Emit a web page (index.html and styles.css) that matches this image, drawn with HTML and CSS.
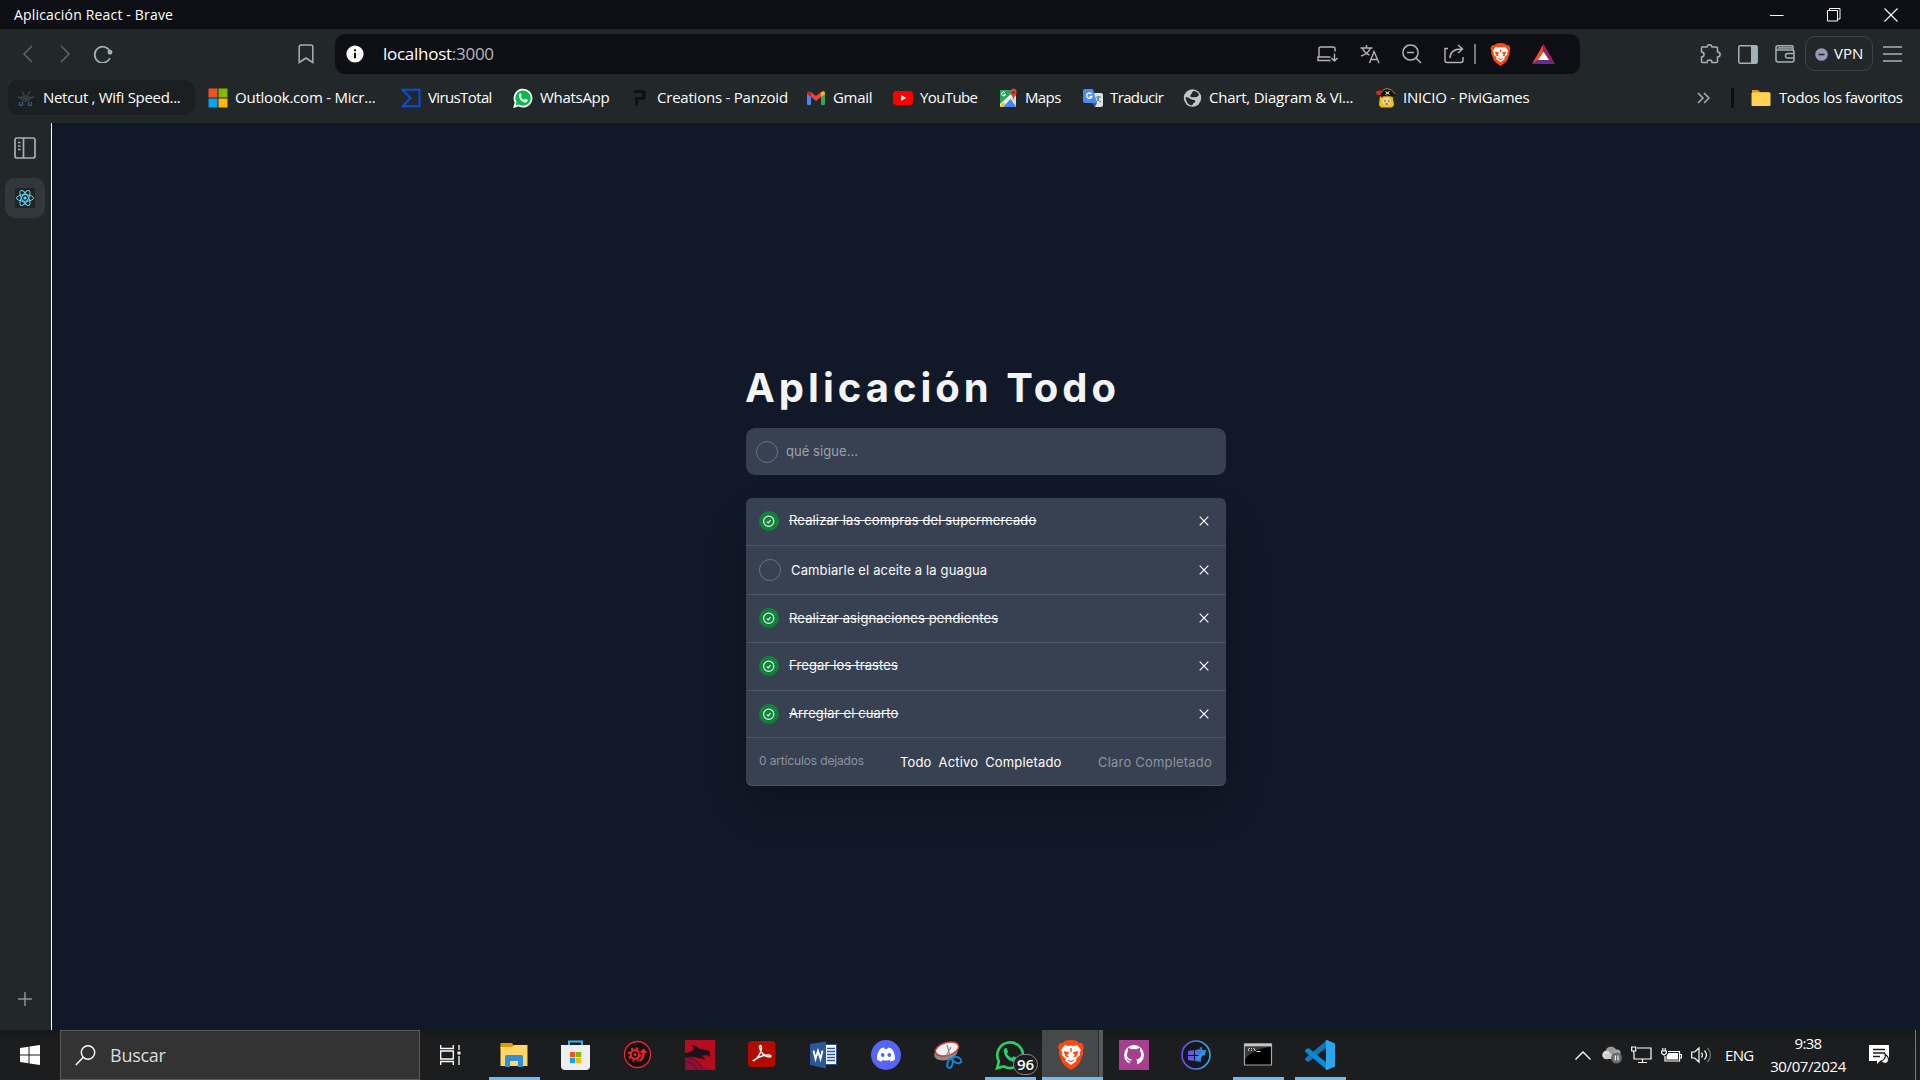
FILE: index.html
```html
<!DOCTYPE html>
<html lang="es">
<head>
<meta charset="utf-8">
<title>Aplicación React</title>
<link rel="stylesheet" href="styles.css">
</head>
<body>
<svg class="defs" width="0" height="0">
  <symbol id="lion" viewBox="0 0 26 30">
    <path fill="#fb4b12" d="M7 1Q13-1 19 1l2 2 3 0 2 4-1 3 0 4-3 8Q20 26 13 30 6 26 4 22L1 14V10L0 7 2 3H5z"/>
    <path fill="#fff" d="M7 5l3 1 3-.7L16 6l3-1 4 5-1.500 3 .5 2-4 4 .5 2-5.500 4-5.500-4 .5-2-4-4 .5-2L3 10z"/>
    <path fill="#fb4b12" d="M5.500 11l5 1 .5 1.500-2 1.500 2.500 2.500-4-1zM20.500 11l-5 1-.5 1.500 2 1.500-2.500 2.500 4-1zM12.300 8h1.400v4h-1.400zM9.500 19.500l3.500 1.500 3.500-1.500v.8L13 22.500l-3.500-2.200z"/>
  </symbol>
  <symbol id="check" viewBox="0 0 20 20">
    <circle cx="10" cy="10" r="10" fill="#15803d"/>
    <circle cx="9.700" cy="10.300" r="5.100" fill="none" stroke="#d1fae5" stroke-width="1.200"/>
    <path d="M7.900 10.700l1.400 1.200 2.300-2.800" fill="none" stroke="#d1fae5" stroke-width="1.300"/>
  </symbol>
  <symbol id="cross" viewBox="0 0 10 10"><path d="M.7.7l8.600 8.600M9.300.7L.7 9.300" fill="none" stroke="#fff" stroke-width="1.200"/></symbol>
  <symbol id="wapp" viewBox="0 0 30 30">
    <path d="M2 28.300l1.900-6.900A12.800 12.800 0 1 1 8.700 26.300z" fill="var(--wa-fill)" stroke="var(--wa-line)" stroke-width="2.600"/>
    <path d="M10.500 8q-2 1-1.800 3.500Q10 19 17 21.600q4 1 5-2.600l-.2-1.200-3.200-1.500-1.800 1.800q-3.300-1.200-5-4.500l1.300-1.700L11.700 8z" fill="var(--wa-phone)"/>
  </symbol>
</svg>

<header class="titlebar">
  <span class="titlebar-text">Aplicación React - Brave</span>
  <div class="window-buttons">
    <svg width="14" height="14" viewBox="0 0 14 14"><path d="M0 7.500h13.500" stroke="#fff"/></svg>
    <svg width="14" height="14" viewBox="0 0 14 14" fill="none" stroke="#fff"><path d="M.5 2.500h10v10.500h-10zM2.500 2.500v-2h10.500v10.500h-2.500"/></svg>
    <svg width="14" height="14" viewBox="0 0 14 14"><path d="M.5.500l13 13M13.500.500l-13 13" stroke="#fff" stroke-width="1.100"/></svg>
  </div>
</header>

<nav class="toolbar">
  <div class="nav-buttons">
    <svg width="12" height="18" viewBox="0 0 12 18" fill="none" stroke="#5d666b" stroke-width="1.500"><path d="M10 1L2 9l8 8"/></svg>
    <svg width="12" height="18" viewBox="0 0 12 18" fill="none" stroke="#5d666b" stroke-width="1.500"><path d="M2 1l8 8-8 8"/></svg>
    <svg width="20" height="18" viewBox="0 0 20 18" fill="none" stroke="#a3b2b9" stroke-width="1.700"><path d="M17 6.500A8 8 0 1 0 17 13"/><circle cx="17" cy="7.300" r="1.600" fill="#a3b2b9"/></svg>
  </div>
  <svg class="save" width="16" height="20" viewBox="0 0 16 20" fill="none" stroke="#a3b2b9" stroke-width="1.500"><path d="M1.200 18.500V3q0-2 2-2h9.600q2 0 2 2v15.500L8 14z"/></svg>
  <div class="address">
    <svg width="18" height="18" viewBox="0 0 18 18"><circle cx="9" cy="9" r="8.600" fill="#fff"/><path d="M9 7.800v5.400M9 4.300v2" stroke="#111" stroke-width="2"/></svg>
    <span class="url">localhost<span class="port">:3000</span></span>
    <div class="address-icons">
      <svg width="21" height="16" viewBox="0 0 21 16" fill="none" stroke="#b4b4b6" stroke-width="1.400"><path d="M2 11V2.500Q2 1 3.500 1H16q2 0 2 2v2.500M13.500 11H1v3.500h12.500M17.500 7.500v7M14.500 12l3 3 3-3"/></svg>
      <svg width="20" height="20" viewBox="0 0 20 20" fill="none" stroke="#b4b4b6" stroke-width="1.400"><path d="M.5 4h12M6.500 1v3M2.500 4Q5 10 9.500 11M10.500 4Q8 10 1 12M9.500 19L14 7.500 19 19M11 15.500h6.500"/></svg>
      <svg width="20" height="20" viewBox="0 0 20 20" fill="none" stroke="#b4b4b6" stroke-width="1.500"><circle cx="8.500" cy="8.500" r="7.600"/><path d="M14 14l5 5M5 8.500h7"/></svg>
      <svg width="21" height="20" viewBox="0 0 21 20" fill="none" stroke="#b4b4b6" stroke-width="1.400"><path d="M4 4.500H1v12q0 2 2 2h14q2 0 2-2V13M6 14q0-9 12-9M14 1l4.500 4-4.500 4"/></svg>
      <i class="divider"></i>
      <svg class="shield" width="21" height="23"><use href="#lion"/></svg>
      <svg width="23" height="20" viewBox="0 0 23 20"><path d="M11.500 0v7L6 16l-6 4z" fill="#ff4724"/><path d="M11.500 0L23 20l-6-4-5.500-9z" fill="#9e1f63"/><path d="M0 20h23l-6-4H6z" fill="#662d91"/><path d="M11.500 7.500L17 16H6z" fill="#fff"/></svg>
    </div>
  </div>
  <div class="tools">
    <svg width="21" height="20" viewBox="0 0 21 20" fill="none" stroke="#a3b2b9" stroke-width="1.500"><path d="M2 3h5q0-2.300 2.500-2.300T12 3h4.500q1 0 1 1v4q2.600 0 2.600 2.500T17.500 13v4.500q0 1-1 1H12q0-2.600-2.500-2.600T7 18.500H2.500q-1 0-1-1V13q2.500 0 2.500-2.500T1.500 8V4q0-1 .5-1z"/></svg>
    <svg width="20" height="19" viewBox="0 0 20 19"><rect x=".8" y=".8" width="18.400" height="17.400" rx="1.500" fill="none" stroke="#a3b2b9" stroke-width="1.500"/><path d="M13 1h6v17h-6z" fill="#a3b2b9"/></svg>
    <svg width="20" height="18" viewBox="0 0 20 18" fill="none" stroke="#a3b2b9" stroke-width="1.500"><path d="M18 5V1.500q0-.7-.8-.7H3Q1 .8 1 2.500V15q0 2 2 2h14q2 0 2-2V7q0-2-2-2H3Q1 5 1 3M19 8.500h-6.500q-2 0-2 2.300t2 2.300H19"/><path d="M3 2.900h14"/></svg>
    <span class="vpn"><svg width="13" height="13" viewBox="0 0 13 13"><circle cx="6.500" cy="6.500" r="6.300" fill="#9a98b5"/><path d="M3.500 6.500h6" stroke="#22262a" stroke-width="1.600"/></svg>VPN</span>
    <svg width="19" height="16" viewBox="0 0 19 16" stroke="#a3b2b9" stroke-width="1.500"><path d="M0 1h19M0 8h19M0 15h19"/></svg>
  </div>
</nav>

<nav class="bookmarks">
  <span class="bookmark hovered"><svg width="20" height="20" viewBox="0 0 20 20"><g stroke="#3c4347" stroke-width="1.300" fill="none"><path d="M6 3l2 4M14 3l-2 4M2 9l4 1M18 9l-4 1"/></g><ellipse cx="9.500" cy="10.500" rx="5" ry="3.500" fill="#33393d"/><path d="M4 14q-2 3.500 1 3.500t1-3.500M15 14q2 3.500-1 3.500t-1-3.500" fill="none" stroke="#2f6680" stroke-width="1.300"/></svg>Netcut , Wifi Speed...</span>
  <span class="bookmark loose"><svg width="20" height="20" viewBox="0 0 20 20"><path fill="#f25022" d="M.5.500h9v9h-9z"/><path fill="#7fba00" d="M10.500.5h9v9h-9z"/><path fill="#00a4ef" d="M.5 10.500h9v9h-9z"/><path fill="#ffb900" d="M10.500 10.500h9v9h-9z"/></svg>Outlook.com - Micr...</span>
  <span class="bookmark tight"><svg width="20" height="20" viewBox="0 0 20 20"><path d="M1.500 1.800h17v16.400h-17L9.500 10z" fill="none" stroke="#0b4dda" stroke-width="2"/></svg>VirusTotal</span>
  <span class="bookmark wa-solid"><svg width="20" height="20"><use href="#wapp"/></svg>WhatsApp</span>
  <span class="bookmark loose"><svg width="20" height="20" viewBox="0 0 20 20"><path d="M4 2h10l2 2v6l-2 2H8v6H5V9h7V5H4z" fill="#0f1113"/></svg>Creations - Panzoid</span>
  <span class="bookmark"><svg width="20" height="20" viewBox="0 0 20 20"><path fill="#4285f4" d="M1 5l4 3v9H2q-1 0-1-1z"/><path fill="#34a853" d="M15 8l4-3v11q0 1-1 1h-3z"/><path fill="#ea4335" d="M5 4l5 4 5-4v5l-5 4-5-4z"/><path fill="#c5221f" d="M1 5q0-3 4-1v5L1 6z"/><path fill="#fbbc04" d="M15 4q4-2 4 1v1l-4 3z"/></svg>Gmail</span>
  <span class="bookmark tight"><svg width="20" height="20" viewBox="0 0 20 20"><rect y="3" width="20" height="14" rx="3.500" fill="#f00"/><path d="M8 7l5 3-5 3z" fill="#fff"/></svg>YouTube</span>
  <span class="bookmark tight"><svg width="20" height="20" viewBox="0 0 20 20"><path fill="#26a85b" d="M2 2h14v16H2z"/><path fill="#4285f4" d="M4 19l7-9 7 9z"/><path fill="#f4f4f4" d="M2 16L14 5l2 2L5 19H2z"/><path fill="#fbc116" d="M2 18l3-4 2 2-2 3H2z"/><path fill="#d9dde0" d="M12 10l6-3v12z"/><path d="M15.500 12q0-3-2.500-5-2-6 2.500-6.500Q20 1 18 7q-2.500 2-2.500 5z" fill="#db4437"/><circle cx="15.500" cy="4.500" r="1.300" fill="#7b231e"/><path d="M7 4.500a2 2 0 1 0 .5 2H5.800" fill="none" stroke="#fff"/></svg>Maps</span>
  <span class="bookmark tight"><svg width="20" height="20" viewBox="0 0 20 20"><path fill="#dfe3e6" d="M9 5h9q2 0 2 2v10q0 2-2 2h-6z"/><path fill="#4a8af4" d="M2 1h8l4 14H2q-2 0-2-2V3q0-2 2-2z"/><path fill="#3554ba" d="M9 15h5l-2 4z"/><path d="M8.500 6a2.700 2.700 0 1 0 .5 2.500H6.500" fill="none" stroke="#fff" stroke-width="1.300"/><path d="M13 9h5M16 8q0 4-3 6M14 10q1 3 4 4" fill="none" stroke="#60717a"/></svg>Traducir</span>
  <span class="bookmark loose"><svg width="20" height="20" viewBox="0 0 20 20"><circle cx="10.500" cy="10" r="8.700" fill="#c3c7cb"/><path d="M11 3q5 0 6 4-2 3-5 2-3 1-4-1 2-3 3-5zM3.500 9q3 0 5 2 2 1 4 1 2 2-1 3-1 2-2 2.500Q4 16 3.500 9z" fill="#23282b"/></svg>Chart, Diagram &amp; Vi...</span>
  <span class="bookmark loose"><svg width="20" height="20" viewBox="0 0 20 20"><path fill="#e8c51d" d="M4 8h12.500l1.500 9-2 2.500H5L3 17z"/><ellipse cx="10.500" cy="13.500" rx="4.300" ry="4" fill="#efd09a"/><path fill="#111" d="M4 7Q5 1 11 .5 17 0 19.500 7l-2 2.500Q11 7 5 9.500z"/><path d="M5 5Q7 .5 11 .5 16 .5 19 6M5 9.500q6-3 12.500 0" fill="none" stroke="#b58a24"/><path fill="#d42d28" d="M0 3.500l5-1.500-.5 5L1 7z"/><path d="M9.500 3.500l4 3M13.500 3.500l-4 3" stroke="#fff"/><path d="M8 13h1.500M12 13h1.500M9.500 16h2.500" stroke="#5a3a12"/></svg>INICIO - PiviGames</span>
  <svg class="more" width="13" height="12" viewBox="0 0 13 12" fill="none" stroke="#a3b2b9" stroke-width="1.500"><path d="M1 1l5 5-5 5M7 1l5 5-5 5"/></svg>
  <i class="bar"></i>
  <span class="bookmark all"><svg width="20" height="18" viewBox="0 0 20 18"><path fill="#d79a1c" d="M1 1h6l2 2h9v5H1z"/><rect x=".5" y="3.500" width="19" height="13.500" rx="1" fill="#ffd154"/></svg>Todos los favoritos</span>
</nav>

<div class="browser">
  <aside class="side-tabs">
    <svg class="panel-icon" width="22" height="22" viewBox="0 0 22 22" fill="none" stroke="#a3b2b9" stroke-width="1.700"><rect x="1" y="1" width="20" height="20" rx="2"/><path d="M9.500 1v20M4 5.500h2.500M4 9h2.500M4 12.500h2.500"/></svg>
    <div class="tab">
      <svg width="20" height="20" viewBox="0 0 20 20"><rect width="20" height="20" rx="2" fill="#222"/><g fill="none" stroke="#61dafb"><ellipse cx="10" cy="10" rx="8.500" ry="3.300"/><ellipse cx="10" cy="10" rx="8.500" ry="3.300" transform="rotate(60 10 10)"/><ellipse cx="10" cy="10" rx="8.500" ry="3.300" transform="rotate(120 10 10)"/></g><circle cx="10" cy="10" r="1.600" fill="#61dafb"/></svg>
    </div>
    <svg class="new-tab" width="14" height="14" viewBox="0 0 14 14" stroke="#8d9295" stroke-width="1.500"><path d="M7 0v14M0 7h14"/></svg>
  </aside>
  <main class="page">
    <div class="todo">
      <h1>Aplicación Todo</h1>
      <div class="new-item"><span class="ring"></span><span class="hint">qué sigue...</span></div>
      <section class="list">
        <div class="item done h47"><svg class="mark"><use href="#check"/></svg><span class="label">Realizar las compras del supermercado</span><svg class="remove"><use href="#cross"/></svg></div>
        <div class="item h48"><span class="ring"></span><span class="label">Cambiarle el aceite a la guagua</span><svg class="remove"><use href="#cross"/></svg></div>
        <div class="item done h47"><svg class="mark"><use href="#check"/></svg><span class="label level">Realizar asignaciones pendientes</span><svg class="remove"><use href="#cross"/></svg></div>
        <div class="item done h47"><svg class="mark"><use href="#check"/></svg><span class="label">Fregar los trastes</span><svg class="remove"><use href="#cross"/></svg></div>
        <div class="item done h46"><svg class="mark"><use href="#check"/></svg><span class="label">Arreglar el cuarto</span><svg class="remove"><use href="#cross"/></svg></div>
        <footer class="summary">
          <span class="count">0 artículos dejados</span>
          <div class="filters"><span>Todo</span><span>Activo</span><span>Completado</span></div>
          <span class="clear">Claro Completado</span>
        </footer>
      </section>
    </div>
  </main>
</div>

<footer class="taskbar">
  <div class="start"><svg width="20" height="20" viewBox="0 0 20 20" fill="#fff"><path d="M0 3l8.500-1.200v7.700H0zM9.500 1.600L20 0v9.500H9.500zM0 10.500h8.500v7.700L0 17zM9.500 10.500H20V20L9.500 18.400z"/></svg></div>
  <div class="search">
    <svg width="21" height="21" viewBox="0 0 21 21" fill="none" stroke="#fff" stroke-width="1.400"><circle cx="13" cy="7.500" r="6.700"/><path d="M8.300 12.300L.8 20"/></svg>
    <span>Buscar</span>
  </div>
  <div class="task-view"><svg width="21" height="20" viewBox="0 0 21 20" fill="none" stroke="#fff" stroke-width="1.300"><path d="M.7 0v3.500h12.600V0M.7 20v-3.500h12.600V20M.7 6h12.600v8H.7zM19 0v5M19 11v9"/><path d="M17.500 6.500h3v3h-3z" fill="#fff" stroke="none"/></svg></div>
  <div class="apps">
    <div class="app open"><svg width="30" height="30" viewBox="0 0 30 30"><path fill="#e09a00" d="M1.500 3H13l2 3v3H1.500z"/><path fill="#ffd667" d="M1.500 7H13l2-2h13.500v21h-27z"/><path fill="#2f8fd8" d="M6 27V17q0-2 2-2h14q2 0 2 2v10h-5v-6h-8v6z"/></svg></div>
    <div class="app"><svg width="30" height="30" viewBox="0 0 30 30"><path d="M8 7V1.500h13V7" fill="none" stroke="#2fb4f2" stroke-width="2"/><path d="M0 5h29v21q0 4-4 4H4q-4 0-4-4z" fill="#efefef"/><path fill="#f25022" d="M9 12h5.200v5.200H9z"/><path fill="#7fba00" d="M15 12h5.200v5.200H15z"/><path fill="#00a4ef" d="M9 18h5.200v5.200H9z"/><path fill="#ffb900" d="M15 18h5.200v5.200H15z"/></svg></div>
    <div class="app"><svg width="30" height="30" viewBox="0 0 30 30"><circle cx="14.500" cy="14.500" r="13" fill="#111" stroke="#ef2529" stroke-width="1.300"/><circle cx="12" cy="14.500" r="4.300" fill="none" stroke="#ef2529" stroke-width="2.200"/><circle cx="12" cy="14.500" r="6.200" fill="none" stroke="#ef2529" stroke-width="2" stroke-dasharray="2.430 2.440"/><circle cx="12" cy="14.500" r="1.500" fill="#ef2529"/><path d="M11 21q8 1 8-8h-3l4.500-5 4.500 5h-3q0 9.500-8 9z" fill="#ef2529" stroke="#111" stroke-width=".7"/></svg></div>
    <div class="app"><svg width="30" height="30" viewBox="0 0 30 30"><path fill="#b50d1f" d="M0 0h30v30H0z"/><path d="M0 15Q8 16 12 21t14 9H0z" fill="#8e1035"/><path d="M0 17q12 0 17 12M0 22q8 0 12 8" fill="none" stroke="#5b0d28"/><path fill="#1c1219" d="M0 13q7-1 9-4l-2-4 7 4 8 1 3 3v4l-3-2-6 1q4 1 4 4-3-2-7-2-6-2-13-1z"/><path d="M14 9L9 6M18 11l7 1" stroke="#1c1219" stroke-width="1.500"/></svg></div>
    <div class="app"><svg width="30" height="30" viewBox="0 0 30 30"><rect x="1" y="1" width="27.500" height="26" rx="4" fill="#b30b00"/><path d="M6.500 20.500c4-1 9-10 7.700-14-.5-1.500-2-1-1.700 1 .8 5 5.500 9.500 10 9.500 2 0 2-2-.5-2-4-.3-11 2-14 4.500-1.500 1.200-1 1.700-1.500 1z" fill="none" stroke="#fff" stroke-width="1.500"/></svg></div>
    <div class="app"><svg width="30" height="30" viewBox="0 0 30 30"><path fill="#fff" stroke="#2b579a" d="M15 4.500h12.500v20H15z"/><path d="M18 8.500h8M18 11.500h8M18 14.500h8M18 17.500h8M18 20.500h8" stroke="#2b579a" stroke-width="1.300"/><path fill="#2b579a" d="M1 4l16-2.500v27L1 25z"/><path d="M4.500 10.500l2 8.500L9 11l2.500 8 2-8.500" fill="none" stroke="#fff" stroke-width="1.900"/></svg></div>
    <div class="app"><svg width="30" height="30" viewBox="0 0 30 30"><circle cx="15" cy="15" r="15" fill="#5865f2"/><path d="M9 9q2-1.300 4-1.400l.7 1.400h2.600l.7-1.400q2 .1 4 1.400 3.300 5 3 10.500-2 1.600-4.300 2.200l-1-1.800q-3.700 1-7.400 0l-1 1.800Q8 21.100 6 19.500 5.700 14 9 9z" fill="#fff"/><circle cx="11.700" cy="15" r="1.900" fill="#5865f2"/><circle cx="18.300" cy="15" r="1.900" fill="#5865f2"/></svg></div>
    <div class="app"><svg width="30" height="30" viewBox="0 0 30 30"><ellipse cx="13" cy="13" rx="12" ry="7" transform="rotate(-16 13 13)" fill="#8b8b8b"/><ellipse cx="14" cy="9" rx="12" ry="6.500" transform="rotate(-16 14 9)" fill="#f1f1f1" stroke="#c43b3b" stroke-width="1.500"/><path d="M14 5l4 14M18 7l-6 11" stroke="#8d8d8d" stroke-width="1.200"/><g fill="none" stroke="#1584cf" stroke-width="2"><ellipse cx="17" cy="23.500" rx="2.500" ry="4.500" transform="rotate(15 17 23.500)"/><ellipse cx="24" cy="20" rx="4.500" ry="2.800" transform="rotate(25 24 20)"/></g></svg></div>
    <div class="app open wa-line"><svg width="30" height="30"><use href="#wapp"/></svg><span class="badge">96</span></div>
    <div class="app open active"><svg width="26" height="30"><use href="#lion"/></svg></div>
    <div class="app"><svg width="30" height="30" viewBox="0 0 30 30"><path fill="#a63f8f" d="M0 0h30v30H0z"/><circle cx="15" cy="15" r="10" fill="#fff"/><path d="M12 25.500v-3q-3 .5-4-2M18 25.500v-4q0-1.500-1-2 5-.5 5-5 0-2-1-3.300.5-1.700-.2-3.200-2 .2-3.300 1.200-2.500-.6-5 0Q11.200 8.200 9.200 8q-.7 1.500-.2 3.200-1 1.300-1 3.300 0 4.500 5 5-1 .5-1 2v4z" fill="#a63f8f"/><path d="M12 24v-3q-3 .5-4-2" fill="none" stroke="#a63f8f"/></svg></div>
    <div class="app"><svg width="30" height="30" viewBox="0 0 30 30"><defs><linearGradient id="ring"><stop stop-color="#7447e8"/><stop offset="1" stop-color="#27b5e0"/></linearGradient></defs><circle cx="15" cy="15" r="14" fill="#14171f" stroke="url(#ring)" stroke-width="1.600"/><path fill="#6657e6" d="M7 11l6-1v5H7zM7 16h6v5l-6-1z"/><path fill="#4a70e2" d="M14 10l6-1v6h-6zM14 16h6v6l-6-1z"/><path fill="#2299e0" d="M16 16q5-1 4-7l-2-1 3-1v3h4l-1 5-3 1q-1 4-5 4z"/></svg></div>
    <div class="app open"><svg width="30" height="30" viewBox="0 0 30 30"><path fill="#000" stroke="#a5a8aa" stroke-width="1.200" d="M1.500 4h27v21h-27z"/><path fill="#c3c6c9" d="M1.500 3.500h27v3h-27z"/><path fill="#3a3a3a" d="M2 7h25q-17 2-25 12z"/><path d="M7 8q-3 1-1 3M8.500 8v1M8.500 10v1M10.500 8l2 3M13.500 11.500h4" fill="none" stroke="#ddd"/></svg></div>
    <div class="app open"><svg width="30" height="30" viewBox="0 0 30 30"><path fill="#1277b8" d="M22 0v7L4 21.500q-1 .7-2 0L.5 20q-1-1 0-2z"/><path fill="#0a8ad6" d="M22 30v-7L4 8.500q-1-.7-2 0L.5 10q-1 1 0 2z"/><path fill="#2aa5ee" d="M22 0l8 3.500v23L22 30q-2 0-1-2V2q-1-2 1-2z"/></svg></div>
  </div>
  <div class="tray">
    <svg width="16" height="9" viewBox="0 0 16 9" fill="none" stroke="#fff" stroke-width="1.300"><path d="M.5 8.500L8 1l7.500 7.500"/></svg>
    <svg width="20" height="18" viewBox="0 0 20 18"><circle cx="9" cy="6" r="5.500" fill="#999"/><circle cx="4.500" cy="9" r="4.200" fill="#ddd"/><path d="M3 8h12v5H3z" fill="#ccc"/><circle cx="15" cy="7" r="3.500" fill="#aaa"/><circle cx="14.500" cy="12" r="5.500" fill="#6a6a6a"/><path d="M13.300 9.500v5M16 9.500v5" stroke="#fff" stroke-width="1.100"/></svg>
    <svg width="21" height="18" viewBox="0 0 21 18" fill="none" stroke="#fff" stroke-width="1.200"><path d="M6 2h14v11H3V7M11.500 13v3M7 16.500h9M.7 1h4v4h-4zM2.700 5v2"/></svg>
    <svg width="21" height="15" viewBox="0 0 21 15" fill="none" stroke="#fff" stroke-width="1.200"><path d="M7 3.500h11.500v9.500H4V8M19 6.500h1.500v3.500H19M.7 3h4.600v2.500L3 7 .7 5.500zM1.800 0v3M4.200 0v3"/><path d="M7.500 5h9.500v6.500H5.500V8z" fill="#fff" stroke="none"/></svg>
    <svg width="21" height="18" viewBox="0 0 21 18" fill="none" stroke="#fff" stroke-width="1.200"><path d="M.7 6v6h3L8 16V2L3.700 6zM10.500 6.500q2 2.500 0 5M13.500 4.500q4 4.500 0 9"/><path d="M16.500 2q6 7 0 14" stroke="#777"/></svg>
    <span class="lang">ENG</span>
    <div class="clock"><span class="time">9:38</span><span>30/07/2024</span></div>
    <svg width="21" height="20" viewBox="0 0 21 20"><path fill="#fff" d="M0 0h20v16h-9l-3 3v-3H0z"/><path d="M4 4.500h12M4 8h12M4 11.500h7" stroke="#1c1d1e" stroke-width="1.300"/><path d="M16 9q1.500 5-4 7 2 3.500 6 2 4-4-2-9z" fill="#fff" stroke="#1c1d1e" stroke-width="1.200"/></svg>
    <i class="show-desktop"></i>
  </div>
</footer>
</body>
</html>
```
FILE: styles.css
```css
* { box-sizing: border-box; }
body {
  margin: 0;
  width: 1920px;
  height: 1080px;
  overflow: hidden;
  display: flex;
  flex-direction: column;
  font-family: "Open Sans", "Noto Sans", sans-serif;
  color: #fff;
  background: #22272a;
}
svg { display: block; flex: none; }
.defs { position: absolute; }

/* window chrome */
.titlebar {
  height: 29px;
  flex: none;
  display: flex;
  align-items: center;
  justify-content: space-between;
  padding: 0 22px 0 14px;
  background: #0e0f14;
  font-size: 14px;
  letter-spacing: .17px;
}
.window-buttons { display: flex; gap: 43px; }
.toolbar {
  height: 50px;
  flex: none;
  display: flex;
  align-items: center;
}
.nav-buttons { display: flex; gap: 25px; width: 298px; padding-left: 22px; }
.nav-buttons svg:last-child { margin-left: -3px; }
.address {
  width: 1245px;
  height: 40px;
  margin-left: 21px;
  padding: 0 25px 0 11px;
  display: flex;
  align-items: center;
  border-radius: 10px;
  background: #0e0f14;
}
.url { margin-left: 19px; padding-bottom: 2px; font-size: 17px; letter-spacing: -.27px; }
.port { color: #b6b7ba; }
.address-icons { display: flex; align-items: center; margin-left: auto; gap: 22px; }
.divider { width: 2px; height: 20px; margin: 0 -8px 0 -13px; background: #77797c; }
.shield { margin-right: -1px; }
.tools { display: flex; align-items: center; gap: 17px; margin-left: 120px; }
.vpn {
  display: flex;
  align-items: center;
  gap: 6px;
  width: 68px;
  height: 35px;
  margin: -1px -7px 0 -7px;
  padding: 0 0 1px 9px;
  border: 1px solid #3b464b;
  border-radius: 10px;
  font-size: 15px;
}
.vpn svg { margin-top: 2px; }

.bookmarks {
  height: 44px;
  flex: none;
  display: grid;
  grid-template-columns: 200px 193px 112px 117px 176px 87px 105px 85px 99px 194px 321px 34px 20px 1fr;
  align-items: center;
  padding: 1px 0 8px 8px;
}
.bookmark {
  display: flex;
  align-items: center;
  gap: 7px;
  height: 35px;
  padding-bottom: 2px;
  font-size: 15px;
  letter-spacing: -.3px;
  white-space: nowrap;
}
.bookmark svg { margin-top: 2px; }
.hovered { width: 187px; padding-left: 8px; border-radius: 10px; background: #1b1f21; }
.tight { letter-spacing: -.62px; }
.loose { letter-spacing: -.22px; }
.all { gap: 8px; letter-spacing: -.43px; }
.bar { width: 3px; height: 20px; border-radius: 1px; background: #0e0f14; }
.wa-solid { --wa-fill: #0ab84d; --wa-line: #fff; --wa-phone: #fff; }
.wa-line { --wa-fill: #1c1d1e; --wa-line: #25d366; --wa-phone: #25d366; }

.browser { flex: 1; min-height: 0; display: flex; }
.side-tabs {
  width: 52px;
  display: flex;
  flex-direction: column;
  align-items: center;
  padding: 14px 1px 24px 0;
  border-right: 1px solid #fff;
}
.tab {
  width: 40px;
  height: 40px;
  margin-top: 19px;
  display: grid;
  place-items: center;
  border-radius: 10px;
  background: #30383c;
}
.new-tab { margin-top: auto; }

/* todo app */
.page {
  flex: 1;
  display: flex;
  justify-content: center;
  padding-top: 237px;
  background: #111827;
  font-family: Inter, sans-serif;
}
.todo { width: 480px; }
h1 {
  margin: 0 0 0 -1px;
  height: 68px;
  line-height: 56px;
  font-size: 40px;
  letter-spacing: 4px;
  color: #f3f4f6;
  white-space: nowrap;
}
.new-item {
  height: 47px;
  display: flex;
  align-items: center;
  gap: 8px;
  padding-left: 10px;
  border-radius: 9px;
  background: #374151;
  color: #9ca3af;
  font-size: 13px;
  letter-spacing: .06px;
}
.hint { padding-bottom: 2px; }
.ring { width: 22px; height: 22px; flex: none; border: 1px solid #6b7280; border-radius: 50%; }
.list {
  margin-top: 23px;
  border-radius: 6px;
  background: #374151;
  border-bottom: 1px solid #4b5563;
  box-shadow: 0 22px 45px -10px rgba(0, 0, 0, .28);
}
.item {
  display: flex;
  align-items: center;
  box-sizing: content-box;
  padding: 0 17px 0 13px;
  border-bottom: 1px solid #4b5563;
  font-size: 13px;
  letter-spacing: .13px;
  color: #f9fafb;
}
.h46 { height: 46px; }
.h47 { height: 47px; }
.h48 { height: 48px; }
.label { margin-left: 10px; padding-bottom: 1px; }
.done .label { text-decoration: line-through; padding-bottom: 3px; }
.done .level { padding-bottom: 1px; }
.mark { width: 20px; height: 20px; margin-bottom: 1px; }
.remove { width: 10px; height: 10px; margin: 0 0 1px auto; }
.summary {
  display: flex;
  align-items: center;
  height: 47px;
  padding: 0 14px 0 13px;
  font-size: 13px;
  letter-spacing: .2px;
  color: #8b94a1;
}
.count { width: 141px; padding-bottom: 3px; font-size: 12px; letter-spacing: -.15px; }
.filters { display: flex; gap: 7px; color: #fff; letter-spacing: .16px; }
.clear { margin-left: auto; }

/* taskbar */
.taskbar {
  height: 50px;
  flex: none;
  display: flex;
  background: linear-gradient(#171819, #1c1d1e 14px);
}
.start { width: 60px; display: grid; place-items: center; }
.search {
  width: 360px;
  display: flex;
  align-items: center;
  gap: 14px;
  padding-left: 14px;
  border: 1px solid #5a5a5a;
  background: #333;
  font-size: 18px;
  letter-spacing: -.25px;
  color: #dcdcdc;
}
.task-view { width: 63px; display: flex; align-items: center; padding-left: 20px; }
.apps { display: flex; }
.app { position: relative; width: 62px; display: grid; place-items: center; }
.open::after {
  content: "";
  position: absolute;
  left: 6px;
  bottom: 0;
  width: 51px;
  height: 3px;
  background: #76b9ed;
}
.active { background: linear-gradient(90deg, #474849 56px, #2c2d2e 56px 57px, #58595a 57px) 1px 0 / 61px 100% no-repeat; }
.active svg { margin-right: 2px; }
.active::after { left: 1px; width: 61px; }
.badge {
  position: absolute;
  left: 34px;
  top: 24px;
  width: 25px;
  height: 21px;
  border: 1px solid #8a8a8a;
  border-radius: 11px;
  background: #1c1d1e;
  font-size: 15px;
  font-weight: 600;
  line-height: 18px;
  text-align: center;
}
.tray {
  flex: 1;
  display: flex;
  align-items: center;
  padding-left: 224px;
  gap: 9px;
  font-size: 15px;
}
.tray svg:first-child { margin-right: 2px; }
.lang { margin-left: 4px; width: 28px; letter-spacing: -.7px; }
.clock {
  width: 78px;
  margin-left: 7px;
  display: flex;
  flex-direction: column;
  align-items: center;
  line-height: 23px;
  letter-spacing: -.4px;
}
.time { letter-spacing: -.7px; }
.clock + svg { margin-left: 13px; }
.show-desktop { width: 1px; height: 50px; margin-left: 16px; background: #777; }
```
